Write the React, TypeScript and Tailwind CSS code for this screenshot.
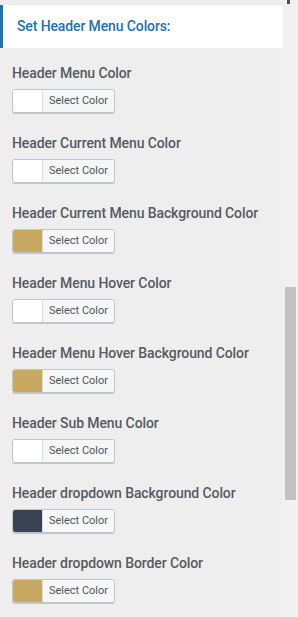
const rows: { label: string; color: string }[] = [
  { label: 'Header Menu Color', color: '#ffffff' },
  { label: 'Header Current Menu Color', color: '#ffffff' },
  { label: 'Header Current Menu Background Color', color: '#c9a861' },
  { label: 'Header Menu Hover Color', color: '#ffffff' },
  { label: 'Header Menu Hover Background Color', color: '#c9a861' },
  { label: 'Header Sub Menu Color', color: '#ffffff' },
  { label: 'Header dropdown Background Color', color: '#3a4356' },
  { label: 'Header dropdown Border Color', color: '#c9a861' },
];

export default function App() {
  return (
    <div
      className="flex w-[298px] h-[617px] overflow-hidden bg-[#eeeeee]"
      style={{ fontFamily: 'Roboto, "Liberation Sans", sans-serif' }}
    >
      {/* Panel */}
      <div className="w-[283px] pt-[5px]">
        <div className="h-[43px] bg-white border-l-[3px] border-[#2271b1] flex items-center pl-[14px]">
          <span className="text-[14px] font-medium tracking-[-0.12px] text-[#2271b1]">Set Header Menu Colors:</span>
        </div>
        <div className="pt-[15px] pl-[12px]">
          {rows.map((r, i) => (
            <div key={i} className="mb-[20px]">
              <div className="h-[20px] leading-[20px] text-[14px] font-medium tracking-[-0.1px] text-[#555b62]">
                {r.label}
              </div>
              <div className="mt-[6px] flex w-[103px] h-[24px] rounded-[3px] border border-[#c3c4c7] shadow-[0_1px_0_#c3c4c7] overflow-hidden">
                <div className="w-[30px] h-full border-r border-[#dcdcde]" style={{ background: r.color }} />
                <div className="flex-1 bg-[#f6f7f7] flex items-center justify-center text-[11px] text-[#50575e]">
                  Select Color
                </div>
              </div>
            </div>
          ))}
        </div>
      </div>

      {/* Scrollbar */}
      <div className="w-[15px] bg-[#f1f1f1] relative">
        <div className="ml-[4px] w-[3px] h-[4px] bg-[#505050]" />
        <div className="ml-[2px] mt-[283px] w-[11px] h-[213px] bg-[#c1c1c1]" />
      </div>
    </div>
  );
}
